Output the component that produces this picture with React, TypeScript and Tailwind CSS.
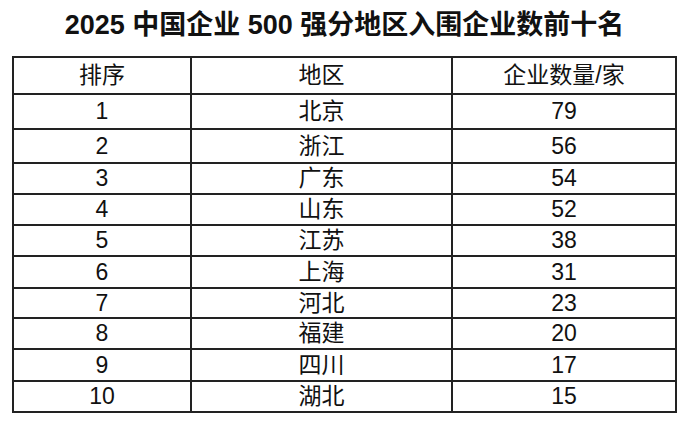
const rows = [
  { rank: "1", region: "北京", count: "79", h: 35 },
  { rank: "2", region: "浙江", count: "56", h: 34 },
  { rank: "3", region: "广东", count: "54", h: 31 },
  { rank: "4", region: "山东", count: "52", h: 31 },
  { rank: "5", region: "江苏", count: "38", h: 31 },
  { rank: "6", region: "上海", count: "31", h: 32 },
  { rank: "7", region: "河北", count: "23", h: 30 },
  { rank: "8", region: "福建", count: "20", h: 31 },
  { rank: "9", region: "四川", count: "17", h: 32 },
  { rank: "10", region: "湖北", count: "15", h: 29 },
];

const font = { fontFamily: '"Liberation Sans", "Noto Sans CJK SC", sans-serif' };

function Row({ cells, h, last }: { cells: string[]; h: number; last?: boolean }) {
  return (
    <div
      className={"flex " + (last ? "" : "border-b-2 border-[#222]")}
      style={{ height: h }}
    >
      <div className="w-[178px] flex items-center justify-center border-r-2 border-[#222]">{cells[0]}</div>
      <div className="w-[261px] flex items-center justify-center border-r-2 border-[#222]">{cells[1]}</div>
      <div className="w-[222px] flex items-center justify-center">{cells[2]}</div>
    </div>
  );
}

export default function App() {
  return (
    <div className="w-[700px] h-[433px] bg-white text-[#111] pl-[12px]" style={font}>
      <div className="w-[665px] h-[50px] flex items-center justify-center text-[27px] font-bold leading-none">
        2025 中国企业 500 强分地区入围企业数前十名
      </div>
      <div className="mt-[6px] w-[665px] border-2 border-[#222] text-[23px] leading-none">
        <Row cells={["排序", "地区", "企业数量/家"]} h={37} />
        {rows.map((r, i) => (
          <Row key={r.rank} cells={[r.rank, r.region, r.count]} h={r.h} last={i === rows.length - 1} />
        ))}
      </div>
    </div>
  );
}
